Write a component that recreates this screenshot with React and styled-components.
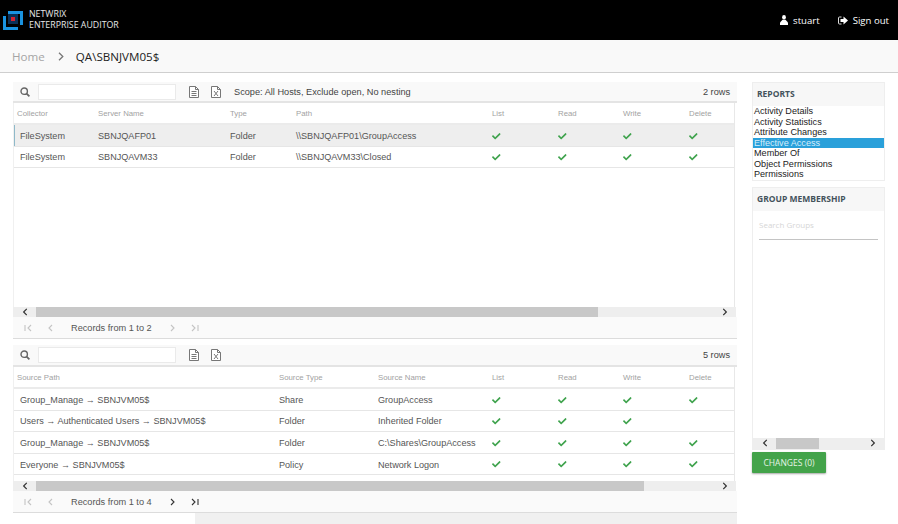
import React from 'react';
import styled, { createGlobalStyle } from 'styled-components';
import { FaCheck, FaChevronLeft, FaChevronRight } from 'react-icons/fa';

const GlobalStyle = createGlobalStyle`
    html, body {
        margin: 0;
        padding: 0;
        background: #fff;
        font-family: "Liberation Sans", Arial, sans-serif;
    }
    * { box-sizing: border-box; }
`;

const reports = ['Activity Details', 'Activity Statistics', 'Attribute Changes', 'Effective Access', 'Member Of', 'Object Permissions', 'Permissions'];

const hostColumns = '84px 132px 66px 196px 66px 65px 66px 46px';
const sourceColumns = '265px 99px 114px 66px 65px 66px 46px';

const hostRows = [
    { cells: ['FileSystem', 'SBNJQAFP01', 'Folder', '\\\\SBNJQAFP01\\GroupAccess'], perms: [1, 1, 1, 1], selected: true },
    { cells: ['FileSystem', 'SBNJQAVM33', 'Folder', '\\\\SBNJQAVM33\\Closed'], perms: [1, 1, 1, 1] },
];

const sourceRows = [
    { cells: ['Group_Manage → SBNJVM05$', 'Share', 'GroupAccess'], perms: [1, 1, 1, 1] },
    { cells: ['Users → Authenticated Users → SBNJVM05$', 'Folder', 'Inherited Folder'], perms: [1, 1, 1, 0] },
    { cells: ['Group_Manage → SBNJVM05$', 'Folder', 'C:\\Shares\\GroupAccess'], perms: [1, 1, 1, 1] },
    { cells: ['Everyone → SBNJVM05$', 'Policy', 'Network Logon'], perms: [1, 1, 1, 1] },
];

const Logo = () => (
    <svg width="20" height="19" viewBox="0 0 20 19">
        <rect x="5" y="3" width="10" height="10" fill="#0b2f55" />
        <path d="M5 0h15v14h-3V3H5z" fill="#1a93e0" />
        <path d="M0 5h3v11h12v3H0z" fill="#1a93e0" />
        <rect x="8" y="6" width="4" height="4" fill="#d5232f" />
    </svg>
);

const UserIcon = () => (
    <svg width="8" height="10" viewBox="0 0 8 10">
        <ellipse cx="4" cy="2.3" rx="1.9" ry="2.3" fill="#fff" />
        <path d="M2.500 4.800h3L8 7.500V10H0V7.500z" fill="#fff" />
    </svg>
);

const SignOutIcon = () => (
    <svg width="10" height="9" viewBox="0 0 10 9">
        <path d="M3.500 1H1.500a1 1 0 0 0-1 1v5a1 1 0 0 0 1 1h2" fill="none" stroke="#ddd" strokeWidth="1" />
        <path d="M2.500 3h3V.5L10 4.500 5.500 8.500V6h-3z" fill="#fff" />
    </svg>
);

const MagnifierIcon = () => (
    <svg width="10" height="10" viewBox="0 0 10 10">
        <circle cx="4.200" cy="4.200" r="3.200" fill="none" stroke="#666" strokeWidth="1.4" />
        <path d="M6.600 6.600L9.400 9.400" stroke="#666" strokeWidth="1.700" />
    </svg>
);

const PageIcon = () => (
    <svg width="10" height="12" viewBox="0 0 10 12">
        <path d="M.5.500h6l3 3v8H.5z" fill="#fff" stroke="#777" />
        <path d="M6.500.500v3h3M2.500 5.500h5M2.500 7.500h5M2.500 9.500h5" fill="none" stroke="#777" />
    </svg>
);

const ExcelIcon = () => (
    <svg width="10" height="12" viewBox="0 0 10 12">
        <path d="M.5.500h6l3 3v8H.5z" fill="#fff" stroke="#777" />
        <path d="M6.500.500v3h3M3 5l4 5M7 5l-4 5" fill="none" stroke="#777" />
    </svg>
);

const pagerPaths = {
    first: 'M1 1v6M7 1L4 4l3 3',
    prev: 'M5 1L2 4l3 3',
    next: 'M3 1l3 3-3 3',
    last: 'M1 1l3 3-3 3M7 1v6',
};

const PagerGlyph = ({ d }) => (
    <svg width="8" height="8" viewBox="0 0 8 8">
        <path d={d} fill="none" stroke="currentColor" strokeWidth="1.100" />
    </svg>
);

const Pager = ({ text, active }) => (
    <PagerBar>
        <PagerButton><PagerGlyph d={pagerPaths.first} /></PagerButton>
        <PagerButton><PagerGlyph d={pagerPaths.prev} /></PagerButton>
        <PagerText>{text}</PagerText>
        <PagerButton $active={active}><PagerGlyph d={pagerPaths.next} /></PagerButton>
        <PagerButton $active={active}><PagerGlyph d={pagerPaths.last} /></PagerButton>
    </PagerBar>
);

const Scrollbar = ({ thumb }) => (
    <ScrollTrack>
        <ScrollArrow><FaChevronLeft /></ScrollArrow>
        <ScrollRail>
            <ScrollThumb style={{ width: thumb }} />
        </ScrollRail>
        <ScrollArrow><FaChevronRight /></ScrollArrow>
    </ScrollTrack>
);

const Toolbar = ({ scope, count, tall }) => (
    <ToolbarRow $tall={tall}>
        <SearchIcon><MagnifierIcon /></SearchIcon>
        <SearchInput />
        <ToolGroup>
            <ToolButton><PageIcon /></ToolButton>
            <ToolButton><ExcelIcon /></ToolButton>
        </ToolGroup>
        <Scope>{scope}</Scope>
        <RowCount>{count}</RowCount>
    </ToolbarRow>
);

const DataTable = ({ columns, heads, rows }) => (
    <>
        <HeadRow $columns={columns}>
            {heads.map(h => <HeadCell key={h}>{h}</HeadCell>)}
        </HeadRow>
        {rows.map((row, i) => (
            <BodyRow key={i} $columns={columns} $selected={row.selected}>
                {row.cells.map((c, j) => <BodyCell key={j}>{c}</BodyCell>)}
                {row.perms.map((p, j) => <CheckCell key={j}>{p ? <FaCheck /> : null}</CheckCell>)}
            </BodyRow>
        ))}
    </>
);

export default function App() {
    return (
        <Page>
            <GlobalStyle />
            <TopBar>
                <Brand>
                    <Logo />
                    <BrandText>NETWRIX<br />ENTERPRISE AUDITOR</BrandText>
                </Brand>
                <TopLinks>
                    <TopLink><UserIcon /> stuart</TopLink>
                    <TopLink><SignOutIcon /> Sign out</TopLink>
                </TopLinks>
            </TopBar>
            <Crumbs>
                <CrumbHome>Home</CrumbHome>
                <CrumbArrow>
                    <svg width="6" height="9" viewBox="0 0 6 9">
                        <path d="M1 .8L4.800 4.500 1 8.200" fill="none" stroke="#777" strokeWidth="1.300" />
                    </svg>
                </CrumbArrow>
                <CrumbCurrent>QA\SBNJVM05$</CrumbCurrent>
            </Crumbs>
            <Main>
                <Content>
                    <Toolbar scope="Scope: All Hosts, Exclude open, No nesting" count="2 rows" />
                    <TableBox $height={204}>
                        <DataTable
                            columns={hostColumns}
                            heads={['Collector', 'Server Name', 'Type', 'Path', 'List', 'Read', 'Write', 'Delete']}
                            rows={hostRows}
                        />
                    </TableBox>
                    <Scrollbar thumb={562} />
                    <Pager text="Records from 1 to 2" />
                    <Spacer />
                    <Toolbar count="5 rows" tall />
                    <TableBox $height={114}>
                        <DataTable
                            columns={sourceColumns}
                            heads={['Source Path', 'Source Type', 'Source Name', 'List', 'Read', 'Write', 'Delete']}
                            rows={sourceRows}
                        />
                    </TableBox>
                    <Scrollbar thumb={608} />
                    <Pager text="Records from 1 to 4" active />
                    <BottomStrip />
                </Content>
                <Side>
                    <ReportsPanel>
                        <SideTitle>REPORTS</SideTitle>
                        <div>
                            {reports.map(r => <ReportItem key={r} $active={r === 'Effective Access'}>{r}</ReportItem>)}
                        </div>
                    </ReportsPanel>
                    <GroupPanel>
                        <SideTitle>GROUP MEMBERSHIP</SideTitle>
                        <GroupBody>
                            <GroupSearch>Search Groups</GroupSearch>
                        </GroupBody>
                        <SideScroll>
                            <ScrollArrow><FaChevronLeft /></ScrollArrow>
                            <SideRail><SideThumb /></SideRail>
                            <ScrollArrow><FaChevronRight /></ScrollArrow>
                        </SideScroll>
                    </GroupPanel>
                    <ChangesButton>CHANGES (0)</ChangesButton>
                </Side>
            </Main>
        </Page>
    );
}

const Page = styled.div`
    width: 898px;
    height: 524px;
    overflow: hidden;
    background: #fff;
`;

const TopBar = styled.div`
    height: 40px;
    background: #000;
    color: #fff;
    display: flex;
    align-items: center;
    justify-content: space-between;
    padding: 0 9px 0 3px;
`;

const Brand = styled.div`
    display: flex;
    align-items: center;
    gap: 6px;
`;

const BrandText = styled.div`
    font-family: "Open Sans", sans-serif;
    font-size: 8.8px;
    line-height: 11.5px;
    color: #e8e8e8;
`;

const TopLinks = styled.div`
    display: flex;
    align-items: center;
    gap: 18px;
`;

const TopLink = styled.div`
    display: flex;
    align-items: center;
    gap: 5px;
    font-family: "Open Sans", sans-serif;
    font-size: 9.6px;
`;

const Crumbs = styled.div`
    height: 33px;
    background: #f9f9f9;
    border-bottom: 1px solid #cfcfcf;
    display: flex;
    align-items: center;
    padding: 0 0 0 12px;
    font-family: "Open Sans", sans-serif;
    font-size: 11.6px;
`;

const CrumbHome = styled.span`
    color: #a5a5a5;
`;

const CrumbArrow = styled.span`
    display: flex;
    margin: 0 12px 0 13px;
`;

const CrumbCurrent = styled.span`
    color: #222;
`;

const Main = styled.div`
    display: flex;
    align-items: flex-start;
    padding: 9px 0 0 13px;
    gap: 15px;
`;

const Content = styled.div`
    width: 724px;
`;

const ToolbarRow = styled.div`
    height: ${p => (p.$tall ? 22 : 21)}px;
    display: flex;
    align-items: center;
    background: #f9f9f9;
    border-bottom: 2px solid #e4e4e4;
    padding: 0 7px;
    font-size: 9.2px;
    color: #444;
`;

const SearchIcon = styled.span`
    display: flex;
    width: 18px;
`;

const SearchInput = styled.div`
    width: 138px;
    height: 16px;
    background: #fff;
    border: 1px solid #eaeaea;
`;

const ToolGroup = styled.div`
    display: flex;
    margin-left: 7px;
`;

const ToolButton = styled.span`
    display: flex;
    justify-content: center;
    width: 22px;
`;

const Scope = styled.span`
    margin-left: 7px;
`;

const RowCount = styled.span`
    margin-left: auto;
`;

const TableBox = styled.div`
    height: ${p => p.$height}px;
    width: 722px;
    background: #fff;
    border-right: 1px solid #e8e8e8;
    border-left: 1px solid #f0f0f0;
    overflow: hidden;
`;

const HeadRow = styled.div`
    display: grid;
    grid-template-columns: ${p => p.$columns};
    height: 22px;
    padding-top: 1px;
    align-items: center;
    border-bottom: 2px solid #ebebeb;
`;

const HeadCell = styled.div`
    font-size: 7.8px;
    color: #a2a2a2;
    white-space: nowrap;
    &:first-child {
        padding-left: 3px;
    }
`;

const BodyRow = styled.div`
    display: grid;
    grid-template-columns: ${p => p.$columns};
    height: 21.6px;
    padding-top: 1px;
    align-items: center;
    background: ${p => (p.$selected ? '#eeeeee' : '#fff')};
    border-bottom: 1px solid #e6e6e6;
    box-shadow: ${p => (p.$selected ? 'inset 1px 0 0 #8fb9c9' : 'none')};
`;

const BodyCell = styled.div`
    font-size: 9.1px;
    color: #555;
    white-space: nowrap;
    &:first-child {
        padding-left: 6px;
    }
`;

const CheckCell = styled.div`
    display: flex;
    color: #3fa34d;
    font-size: 8.5px;
`;

const ScrollTrack = styled.div`
    height: 10px;
    width: 723px;
    display: flex;
    align-items: center;
    background: #eeeeee;
`;

const ScrollArrow = styled.span`
    display: flex;
    justify-content: center;
    width: 23px;
    font-size: 8px;
    color: #333;
`;

const ScrollRail = styled.div`
    flex: 1;
    height: 100%;
`;

const ScrollThumb = styled.div`
    height: 100%;
    background: #c8c8c8;
`;

const PagerBar = styled.div`
    height: 22px;
    display: flex;
    align-items: center;
    background: #fafafa;
    border-bottom: 1px solid #dcdcdc;
    padding: 1px 0 0 3px;
    font-size: 9.2px;
    color: #555;
`;

const PagerButton = styled.span`
    display: flex;
    justify-content: center;
    width: 23px;
    color: ${p => (p.$active ? '#333' : '#c4c4c4')};
`;

const PagerText = styled.span`
    width: 81px;
    margin: 0 8px 0 9px;
    white-space: nowrap;
`;

const Spacer = styled.div`
    height: 6px;
`;

const BottomStrip = styled.div`
    height: 11px;
    margin-left: 182px;
    background: #f0f0f0;
`;

const Side = styled.div`
    width: 133px;
    display: flex;
    flex-direction: column;
`;

const ReportsPanel = styled.div`
    border: 1px solid #eeeeee;
    margin-bottom: 6px;
    background: #fff;
`;

const GroupPanel = styled.div`
    border: 1px solid #eeeeee;
    margin-bottom: 2px;
    background: #fff;
`;

const SideTitle = styled.div`
    height: 23px;
    display: flex;
    align-items: center;
    padding: 0 0 2px 4px;
    background: #f7f7f7;
    font-family: "Open Sans", sans-serif;
    font-size: 8.5px;
    font-weight: 700;
    color: #44535c;
`;

const ReportItem = styled.div`
    height: 10.5px;
    line-height: 10.5px;
    padding-left: 1px;
    font-size: 9.1px;
    color: ${p => (p.$active ? '#d6eefa' : '#222')};
    background: ${p => (p.$active ? '#2aa0da' : 'transparent')};
`;

const GroupBody = styled.div`
    height: 227px;
    padding: 8px 6px 0;
`;

const GroupSearch = styled.div`
    height: 21px;
    border-bottom: 1px solid #c4c4c4;
    font-family: "Open Sans", sans-serif;
    font-size: 8px;
    color: #d6d6d6;
    line-height: 12px;
`;

const SideScroll = styled.div`
    height: 11px;
    display: flex;
    align-items: center;
    background: #eeeeee;
`;

const SideRail = styled.div`
    flex: 1;
    height: 100%;
`;

const SideThumb = styled.div`
    width: 43px;
    height: 100%;
    background: #c8c8c8;
`;

const ChangesButton = styled.div`
    width: 74px;
    height: 21px;
    display: flex;
    align-items: center;
    justify-content: center;
    background: #43a34a;
    color: #e6f3e6;
    font-family: "Open Sans", sans-serif;
    font-size: 8.5px;
    border-radius: 1px;
    box-shadow: 0 1px 2px rgba(0, 0, 0, 0.35);
`;
